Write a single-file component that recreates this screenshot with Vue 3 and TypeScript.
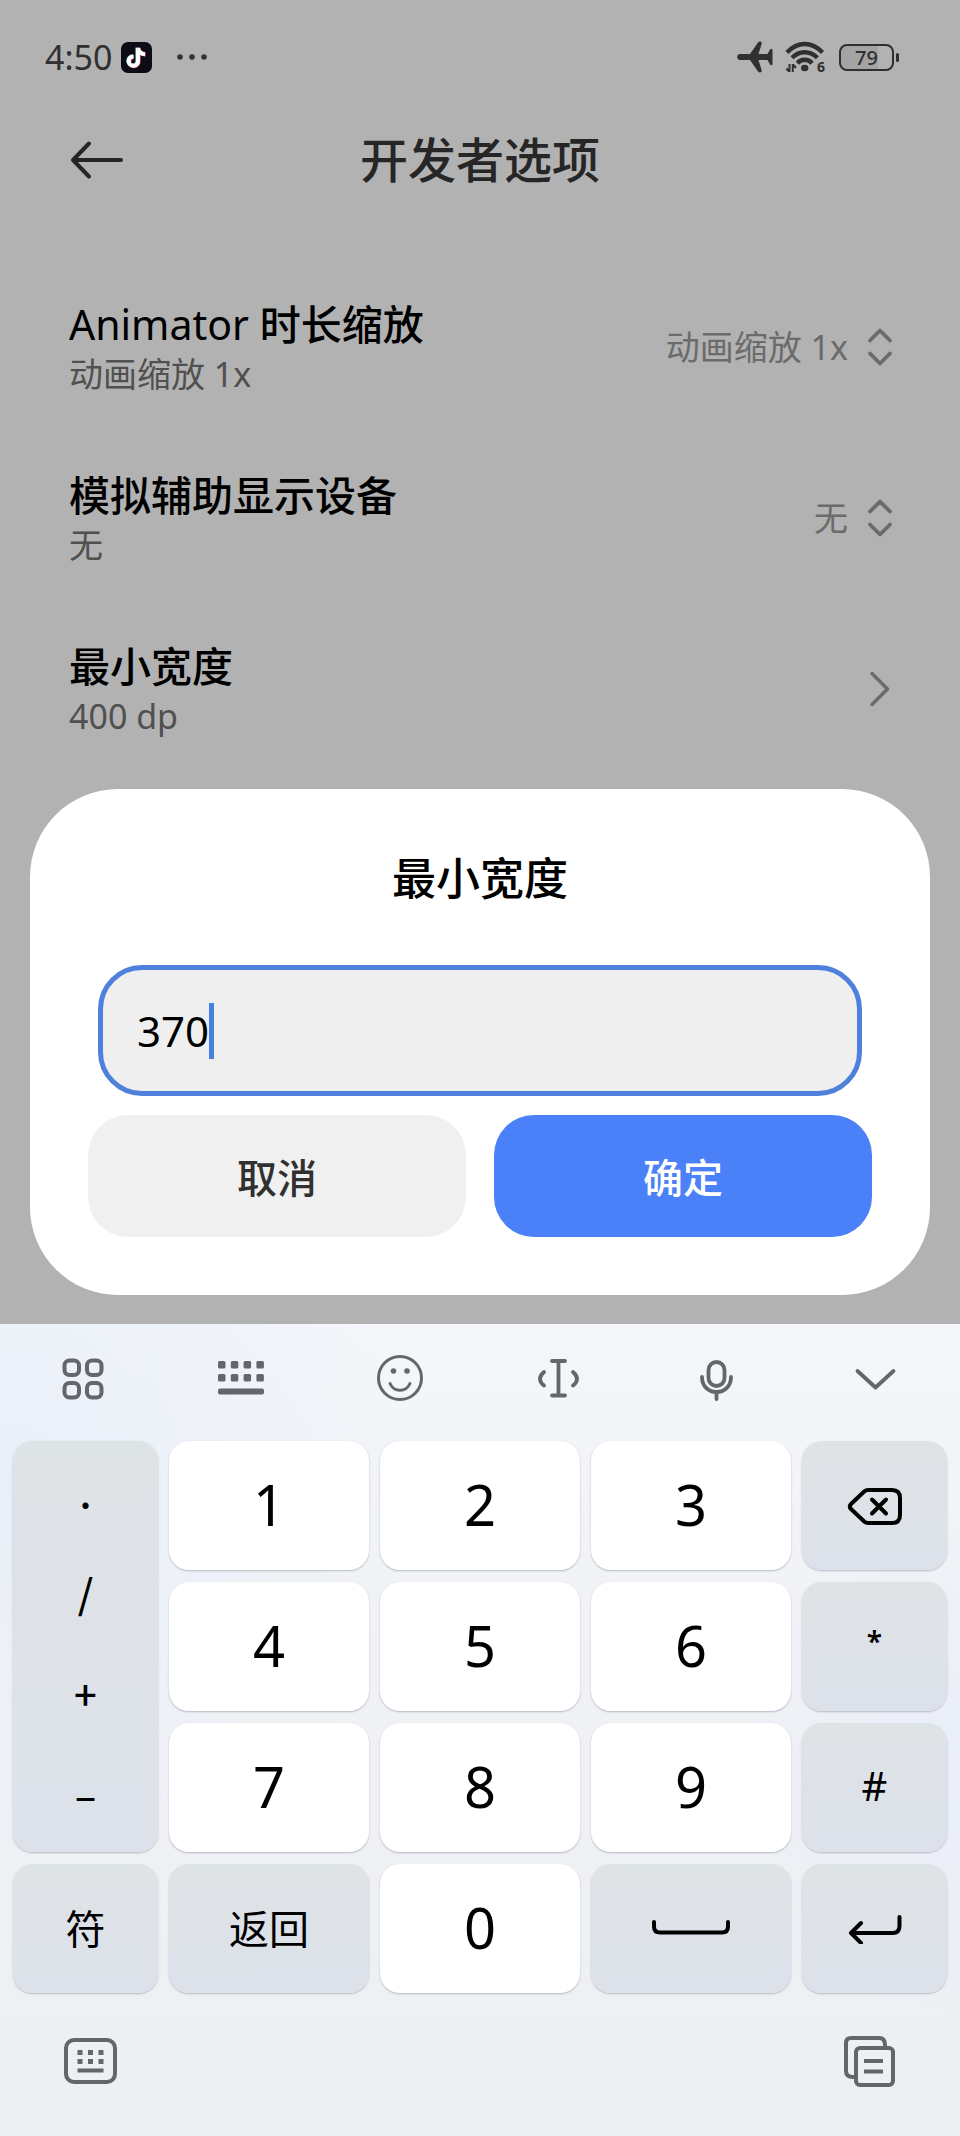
<script setup lang="ts">
import { computed, ref } from 'vue'

interface PickerRow {
  id: string
  title: string
  summary: string
  value: string
}

interface Key {
  id: string
  label: string
  kind: 'digit' | 'symbol' | 'star' | 'word' | 'delete' | 'space' | 'enter'
  text?: string
}

const pickers: PickerRow[] = [
  { id: 'animator', title: 'Animator 时长缩放', summary: '动画缩放 1x', value: '动画缩放 1x' },
  { id: 'overlay', title: '模拟辅助显示设备', summary: '无', value: '无' },
]

const width = ref('370')
const inputStyle = computed(() => ({ width: `${Math.max(width.value.length, 1)}ch` }))

const sideSymbols: string[] = ['.', '/', '+', '–']

const digit = (d: string): Key => ({ id: d, label: d, kind: 'digit', text: d })

const keys: Key[] = [
  digit('1'), digit('2'), digit('3'),
  { id: 'delete', label: '删除', kind: 'delete' },
  digit('4'), digit('5'), digit('6'),
  { id: 'star', label: '*', kind: 'star', text: '*' },
  digit('7'), digit('8'), digit('9'),
  { id: 'hash', label: '#', kind: 'symbol', text: '#' },
  { id: 'symbols', label: '符', kind: 'word', text: '符' },
  { id: 'return', label: '返回', kind: 'word', text: '返回' },
  digit('0'),
  { id: 'space', label: '空格', kind: 'space' },
  { id: 'enter', label: '换行', kind: 'enter' },
]

function press(key: Key): void {
  if (key.kind === 'digit') width.value += key.text ?? ''
  if (key.kind === 'delete') width.value = width.value.slice(0, -1)
}
</script>

<template>
  <div class="screen">
    <div class="status">
      <span class="time">4:50</span>
      <svg class="app-badge" width="31" height="31" viewBox="0 0 31 31" aria-hidden="true">
        <rect width="31" height="31" rx="7" fill="#0d0c14" />
        <g fill="none" stroke-width="4">
          <path d="M16.4 5.6v13.2a4.6 4.6 0 1 1-4.6-4.6M16.4 5.6c.6 3.800 3 6 7 6.200" stroke="#7fd8d8" />
          <path d="M17.600 6.400v13.200a4.6 4.6 0 1 1-4.6-4.6M17.600 6.400c.6 3.800 3 6 7 6.200" stroke="#e0587c" />
          <path d="M17 6v13.200a4.600 4.600 0 1 1-4.600-4.600M17 6c.6 3.800 3 6 7 6.200" stroke="#fff" />
        </g>
      </svg>
      <svg class="more" width="32" height="8" viewBox="0 0 32 8" fill="#333" aria-hidden="true">
        <circle cx="4" cy="4" r="2.800" /><circle cx="16" cy="4" r="2.800" /><circle cx="28" cy="4" r="2.800" />
      </svg>
      <div class="status-icons">
        <svg width="36" height="32" viewBox="0 0 36 32" fill="#303030" aria-hidden="true">
          <path d="M3 13h10l8-11.500c1.500-1.800 4.500-.8 3.600 1.500L21.500 13h9l2.500-4.500c.8-1.200 2.500-.9 2.500.6v13.800c0 1.500-1.700 1.800-2.500.6L30.500 19h-9l3.100 10c.9 2.300-2.100 3.300-3.600 1.500L13 19H3c-3.800 0-3.800-6 0-6z" />
        </svg>
        <svg width="42" height="40" viewBox="0 -4 42 40" fill="none" stroke="#303030" stroke-width="4.400" aria-hidden="true">
          <path d="M2 11.500Q10 3 19.700 3T37.500 11.500M7 16.800q5.500-5.500 12.700-5.500t12.700 5.500M12.300 22.200q3-3.400 7.400-3.400t7.400 3.400" />
          <ellipse cx="19.700" cy="27" rx="3.700" ry="3.300" fill="#303030" stroke="none" />
          <path d="M4.500 23v8M1.500 27.500l2.500 3M7.800 31v-8M8.500 24l2.500 3" stroke-width="2" />
          <text x="32" y="31" font-size="14" font-weight="700" fill="#303030" stroke="none">6</text>
        </svg>
        <div class="battery"><span class="battery-body">79</span><span class="battery-tip"></span></div>
      </div>
    </div>

    <header class="header">
      <button class="back" type="button" aria-label="返回上一页">
        <svg width="56" height="40" viewBox="0 0 56 40" fill="none" stroke="#262626" stroke-width="4" stroke-linecap="round" stroke-linejoin="round">
          <path d="M20 3.500 4 20l16 16.500M4 20h48" />
        </svg>
      </button>
      <h1>开发者选项</h1>
    </header>

    <main class="list">
      <div v-for="row in pickers" :key="row.id" class="row">
        <label class="names" :for="row.id">
          <span class="name">{{ row.title }}</span>
          <span class="summary">{{ row.summary }}</span>
        </label>
        <select :id="row.id" class="value">
          <option>{{ row.value }}</option>
        </select>
        <svg width="24" height="40" viewBox="0 0 24 40" fill="none" stroke="#6b6b6b" stroke-width="3.800" stroke-linecap="round" stroke-linejoin="round" aria-hidden="true">
          <path d="m2 13.500 10-10 10 10M2 26.500l10 10 10-10" />
        </svg>
      </div>
      <button class="row" type="button">
        <span class="names">
          <span class="name">最小宽度</span>
          <span class="summary">400 dp</span>
        </span>
        <svg width="24" height="40" viewBox="0 0 24 40" fill="none" stroke="#6b6b6b" stroke-width="3.500" stroke-linecap="round" stroke-linejoin="round" aria-hidden="true">
          <path d="m4 4.500 15.500 15.500L4 35.500" />
        </svg>
      </button>
    </main>

    <section class="dialog" role="dialog" aria-labelledby="dialog-title">
      <h2 id="dialog-title">最小宽度</h2>
      <label class="field">
        <input v-model="width" :style="inputStyle" type="text" inputmode="numeric" aria-labelledby="dialog-title" />
        <span class="caret"></span>
      </label>
      <div class="actions">
        <button class="action" type="button">取消</button>
        <button class="action primary" type="button">确定</button>
      </div>
    </section>

    <section class="keyboard" aria-label="键盘">
      <div class="tools">
        <button type="button" aria-label="功能">
          <svg viewBox="0 0 48 48" fill="none" stroke="#63666a" stroke-width="4">
            <rect x="5.500" y="6.500" width="14.500" height="14.500" rx="5" /><rect x="28" y="6.500" width="14.500" height="14.500" rx="5" />
            <rect x="5.500" y="29" width="14.500" height="14.500" rx="5" /><rect x="28" y="29" width="14.500" height="14.500" rx="5" />
          </svg>
        </button>
        <button type="button" aria-label="键盘布局">
          <svg viewBox="0 0 48 48" fill="#63666a">
            <rect v-for="n in 8" :key="n" :x="1 + ((n - 1) % 4) * 12.800" :y="n > 4 ? 20 : 7" width="7.500" height="7.500" rx="1.500" />
            <rect x="1" y="34.500" width="46" height="6" rx="2" />
          </svg>
        </button>
        <button type="button" aria-label="表情">
          <svg viewBox="0 0 48 48" fill="none" stroke="#63666a" stroke-width="3" stroke-linecap="round">
            <circle cx="24" cy="24" r="21.500" /><path d="M14 29.500c4 9 16 9 20 0" />
            <circle cx="17.500" cy="17" r="2.800" fill="#63666a" stroke="none" /><circle cx="31" cy="17" r="2.800" fill="#63666a" stroke="none" />
          </svg>
        </button>
        <button type="button" aria-label="移动光标">
          <svg viewBox="0 0 48 48" fill="none" stroke="#63666a" stroke-width="3.800" stroke-linecap="round" stroke-linejoin="round">
            <path d="M18 7h13M18 41.500h13M24.500 7v34.500M10 18q-8 7 0 13.500M39 18q8 7 0 13.500" />
          </svg>
        </button>
        <button type="button" aria-label="语音输入">
          <svg viewBox="0 0 48 48" fill="none" stroke="#63666a" stroke-width="3.800" stroke-linecap="round">
            <rect x="16.500" y="8" width="16" height="24" rx="8" /><path d="M10 23c0 20 29 20 29 0M24.500 38.500V45" />
          </svg>
        </button>
        <button type="button" aria-label="收起键盘">
          <svg viewBox="0 0 48 48" fill="none" stroke="#63666a" stroke-width="3.800" stroke-linecap="round" stroke-linejoin="round">
            <path d="m6.500 17 18 16.500 18-16.500" />
          </svg>
        </button>
      </div>

      <div class="keys">
        <div class="stack">
          <button v-for="s in sideSymbols" :key="s" type="button">{{ s }}</button>
        </div>
        <button v-for="key in keys" :key="key.id" class="key" :class="key.kind" type="button" :aria-label="key.label" @click="press(key)">
          <template v-if="key.text">{{ key.text }}</template>
          <svg v-else-if="key.kind === 'delete'" width="56" height="40" viewBox="0 0 56 40" fill="none" stroke="#000" stroke-width="4" stroke-linecap="round" stroke-linejoin="round">
            <path d="M21 4h24q8 0 8 8v17q0 8-8 8H21q-2 0-3.500-1.300L4 23q-2.500-2.500 0-5L17.500 5.300Q19 4 21 4zM25 13.500l14 14M39 13.500l-14 14" />
          </svg>
          <svg v-else-if="key.kind === 'space'" width="80" height="18" viewBox="0 0 80 18" fill="none" stroke="#000" stroke-width="4" stroke-linecap="round">
            <path d="M3 4v4.500q0 6 6 6h62q6 0 6-6V4" />
          </svg>
          <svg v-else width="56" height="34" viewBox="0 0 56 34" fill="none" stroke="#000" stroke-width="4" stroke-linecap="round" stroke-linejoin="round">
            <path d="M52.500 7v9q0 7-7 7H4M14 13 4 23l10 10" />
          </svg>
        </button>
      </div>

      <div class="footer">
        <button type="button" aria-label="切换输入法">
          <svg width="54" height="54" viewBox="0 0 54 54" fill="#63666a">
            <rect x="3" y="6" width="49" height="42" rx="8" fill="none" stroke="#63666a" stroke-width="4" />
            <rect v-for="n in 6" :key="n" :x="14.500 + ((n - 1) % 3) * 10.500" :y="n > 3 ? 25 : 16" width="5" height="5" />
            <rect x="14.500" y="34.500" width="26" height="4" />
          </svg>
        </button>
        <button type="button" aria-label="剪贴板">
          <svg width="54" height="54" viewBox="0 0 54 54" fill="none" stroke="#63666a" stroke-width="4" stroke-linejoin="round">
            <path d="M14 43h-2q-7 0-7-6V9q0-5 5-5h28q6 0 6 7v2" /><rect x="15" y="14" width="37" height="37" rx="4" />
            <path d="M23 27h19M23 37.500h19" />
          </svg>
        </button>
      </div>
    </section>
  </div>
</template>

<style>
body {
  margin: 0;
  background: #b2b2b2;
}
</style>

<style scoped>
.screen {
  display: flex;
  flex-direction: column;
  min-height: 100vh;
  background: #b2b2b2;
  color: #000;
  font-family: "Noto Sans", "Noto Sans CJK SC", sans-serif;
}

button,
input,
select {
  margin: 0;
  padding: 0;
  border: 0;
  background: none;
  color: inherit;
  font: inherit;
}

svg {
  display: block;
  flex: none;
}

.status {
  display: flex;
  align-items: center;
  height: 114px;
  padding: 0 61px 0 45px;
  color: #303030;
}

.time {
  font-size: 34px;
}

.app-badge {
  margin-left: 9px;
}

.more {
  margin-left: 24px;
}

.status-icons {
  display: flex;
  align-items: center;
  gap: 12px;
  margin-left: auto;
}

.battery {
  display: flex;
  align-items: center;
  gap: 2px;
}

.battery-body {
  box-sizing: border-box;
  width: 55px;
  height: 27px;
  border: 2px solid #303030;
  border-radius: 8px;
  background: linear-gradient(90deg, #a4a4a4 72%, #b2b2b2 72%);
  font-size: 20px;
  font-weight: 500;
  line-height: 23px;
  text-align: center;
}

.battery-tip {
  width: 3px;
  height: 9px;
  border-radius: 2px;
  background: #303030;
}

.header {
  display: grid;
  grid-template-columns: 1fr auto 1fr;
  align-items: center;
  height: 92px;
  padding: 0 69px;
  color: #262626;
}

.back {
  justify-self: start;
}

h1,
h2 {
  margin: 0;
  font-weight: 450;
}

h1 {
  font-size: 48px;
  line-height: 72px;
}

.list {
  padding-top: 55px;
}

.row {
  display: flex;
  align-items: center;
  gap: 20px;
  box-sizing: border-box;
  width: 100%;
  min-height: 171px;
  padding: 0 68px 0 69px;
  text-align: left;
}

.names {
  display: flex;
  flex: 1;
  flex-direction: column;
}

.name {
  font-size: 41px;
  font-weight: 450;
  line-height: 54px;
}

.summary {
  color: #505050;
  font-size: 34px;
  line-height: 46px;
}

.value {
  appearance: none;
  color: #6b6b6b;
  font-size: 34px;
  line-height: 46px;
  text-align-last: right;
}

.dialog {
  margin: 15px 30px 29px;
  padding: 59px 58px 58px;
  border-radius: 88px;
  background: #fff;
}

h2 {
  font-size: 44px;
  line-height: 60px;
  text-align: center;
}

.field {
  display: flex;
  align-items: center;
  box-sizing: border-box;
  height: 131px;
  margin: 57px 10px 19px;
  padding: 0 34px;
  border: 5px solid #4f80dc;
  border-radius: 44px;
  background: #efefef;
  font-size: 42px;
}

.field input {
  height: 60px;
  outline: none;
  caret-color: transparent;
}

.caret {
  width: 5px;
  height: 56px;
  background: #4480e0;
}

.actions {
  display: flex;
  gap: 28px;
}

.action {
  flex: 1;
  height: 122px;
  border-radius: 40px;
  background: #f0f0f0;
  color: #303030;
  font-size: 40px;
  font-weight: 450;
}

.primary {
  background: #4a80f8;
  color: #fff;
}

.keyboard {
  display: flex;
  flex: 1;
  flex-direction: column;
  background:
    radial-gradient(circle at 0 20%, #e9eff9, transparent 36%),
    radial-gradient(circle at 100% 55%, #e9eef9, transparent 24%),
    linear-gradient(#f4f6fa, #f0f1f4 50%, #edeff3);
}

.tools {
  display: grid;
  grid-template-columns: repeat(6, 1fr);
  height: 108px;
  padding: 0 6px 9px 4px;
}

.tools button {
  display: grid;
  place-items: center;
}

.tools svg {
  width: 48px;
  height: 48px;
}

.keys {
  display: grid;
  grid-template-columns: 145fr 200fr 200fr 200fr 145fr;
  grid-auto-rows: 129px;
  gap: 12px 11px;
  padding: 0 13px;
}

.key,
.stack {
  border-radius: 20px;
  background: linear-gradient(#dee3e6, #dde1ea);
  box-shadow: 0 1px 2px #b4b9c1;
}

.key {
  display: grid;
  place-items: center;
  padding-bottom: 4px;
  font-size: 40px;
}

.key.delete {
  padding-bottom: 0;
}

.key.digit {
  background: #fff;
  font-size: 56px;
}

.key.star {
  padding-bottom: 12px;
  font-size: 28px;
  font-weight: 600;
}

.stack {
  display: grid;
  grid-row: span 3;
  grid-template-rows: repeat(4, 1fr);
  padding-bottom: 8px;
  font-family: "Noto Sans CJK SC", sans-serif;
  font-size: 40px;
  font-weight: 500;
}

.footer {
  display: flex;
  justify-content: space-between;
  padding: 41px 65px 48px 63px;
}
</style>
